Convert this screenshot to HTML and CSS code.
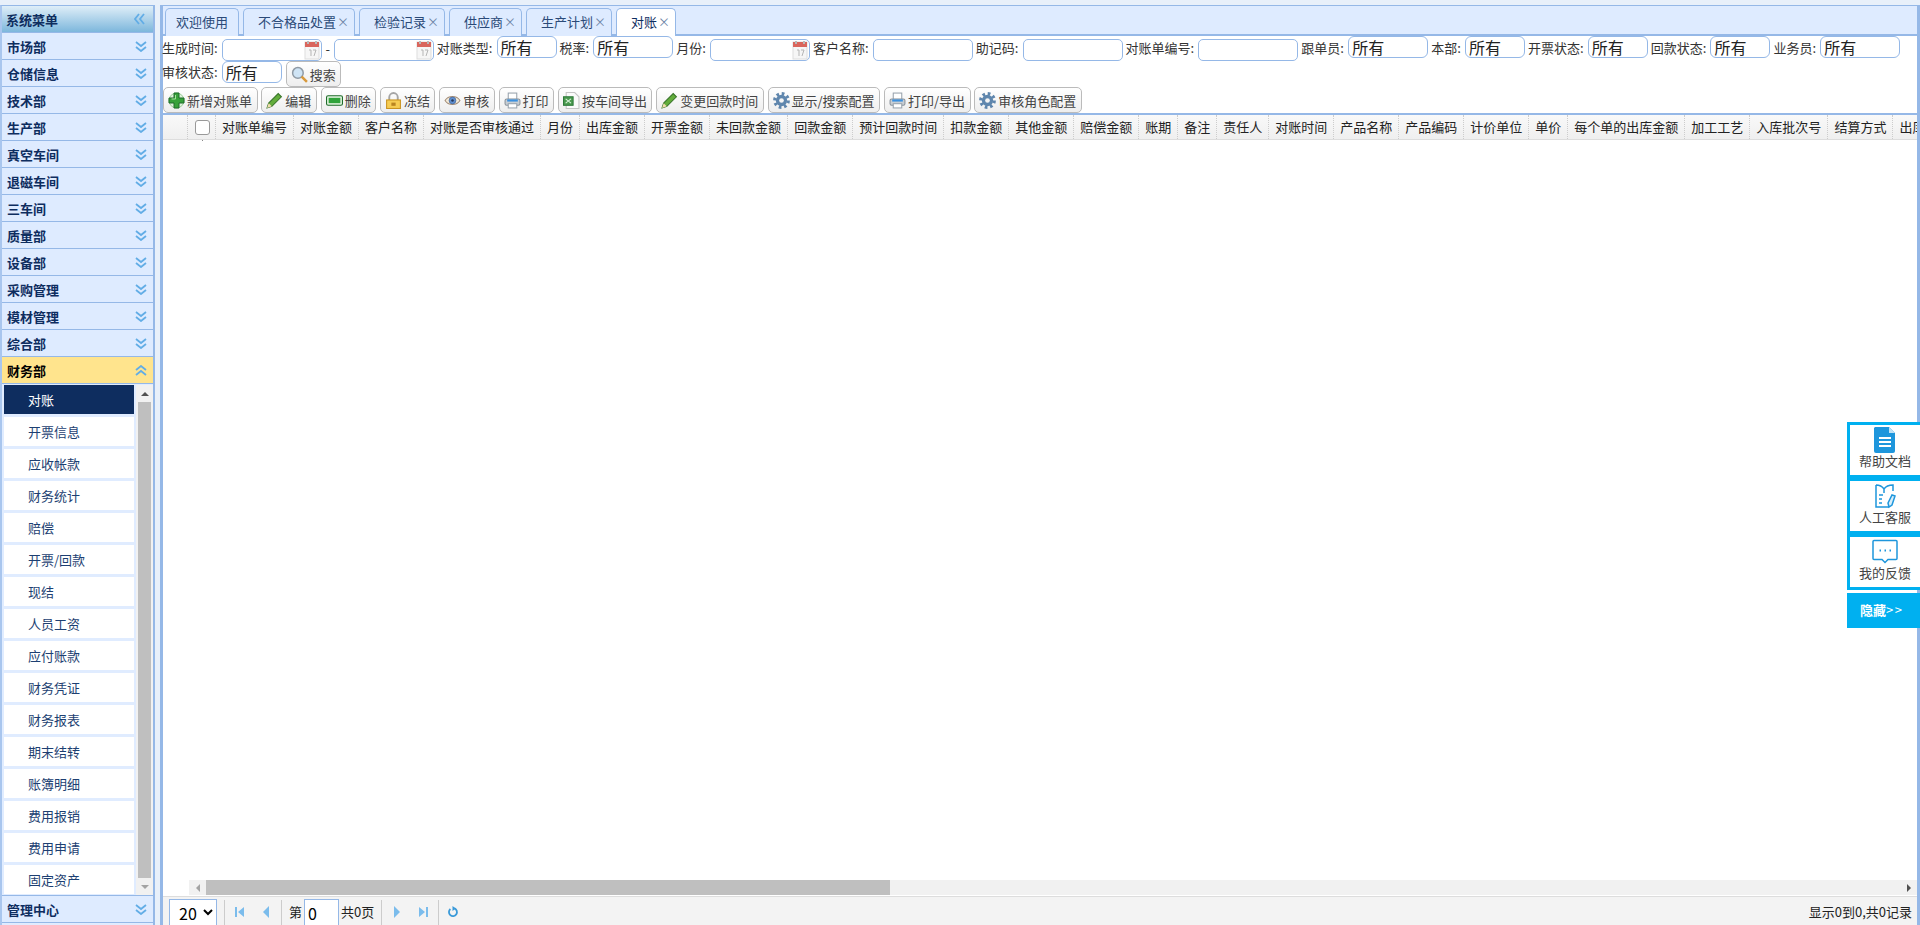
FILE: index.html
```html
<!DOCTYPE html>
<html lang="zh-CN">
<head>
<meta charset="utf-8">
<title>对账</title>
<link rel="stylesheet" href="styles.css">
</head>
<body>
<svg class="defs" width="0" height="0">
  <defs>
    <symbol id="i-down" viewBox="0 0 12 11"><path d="M1 1l5 4 5-4M1 6l5 4 5-4" fill="none" stroke="#62ade6" stroke-width="1.8"/></symbol>
    <symbol id="i-up" viewBox="0 0 12 11"><path d="M1 5l5-4 5 4M1 10l5-4 5 4" fill="none" stroke="#62ade6" stroke-width="1.8"/></symbol>
    <symbol id="i-left" viewBox="0 0 11 12"><path d="M5 1L1 6l4 5M10 1L6 6l4 5" fill="none" stroke="#62ade6" stroke-width="1.8"/></symbol>
    <symbol id="i-cal" viewBox="0 0 16 19">
      <rect x="1" y="1" width="14" height="17" fill="#f6f6f6" stroke="#ddd"/>
      <rect x="1" y="1" width="14" height="5" fill="#d9655c"/>
      <rect x="3" y="0" width="2" height="3" fill="#b9b9b9"/><rect x="11" y="0" width="2" height="3" fill="#b9b9b9"/>
      <path d="M5 9h2v6M9 9h3l-2 6" fill="none" stroke="#b5b5b5"/>
    </symbol>
    <symbol id="i-search" viewBox="0 0 16 16">
      <circle cx="6.500" cy="6.500" r="5" fill="#cfe4f5" stroke="#8f9aa5" stroke-width="1.400"/>
      <path d="M10 10l5 5" stroke="#d89a3d" stroke-width="2.400"/>
    </symbol>
    <symbol id="i-add" viewBox="0 0 17 17">
      <circle cx="8.500" cy="8.500" r="7.500" fill="#dff2dc" stroke="#9ccf98"/>
      <path d="M6 1h5v5h5v5h-5v5H6v-5H1V6h5z" fill="#37a23a" stroke="#1f6b2a"/>
      <path d="M7.500 3v4h-4" fill="none" stroke="#a5e09b"/>
    </symbol>
    <symbol id="i-pen" viewBox="0 0 16 16">
      <path d="M1 15l1.500-4.500 9-9 3 3-9 9z" fill="#63ad3c" stroke="#39752a"/>
      <path d="M1 15l1.500-4.500 3 3z" fill="#f1dcae"/>
    </symbol>
    <symbol id="i-del" viewBox="0 0 16 16">
      <rect x="0.500" y="3.500" width="15" height="9" rx="1.500" fill="#dff2dc" stroke="#1f6b2a"/>
      <rect x="2.500" y="5.500" width="11" height="5" fill="#2fa33a"/>
    </symbol>
    <symbol id="i-lock" viewBox="0 0 16 16">
      <path d="M4 8V5a4 4 0 0 1 8 0v3" fill="none" stroke="#a5a5a5" stroke-width="1.800"/>
      <rect x="1.500" y="7.500" width="13" height="8" fill="#f6cc52" stroke="#c99321"/>
      <rect x="6" y="10" width="4" height="3" fill="#b98420"/>
    </symbol>
    <symbol id="i-eye" viewBox="0 0 16 16">
      <path d="M1 8c3-5 11-5 14 0-3 5-11 5-14 0z" fill="#f2ead8" stroke="#a48d78"/>
      <circle cx="8" cy="8" r="3.200" fill="#5f8fd0" stroke="#3f5f90" stroke-width=".6"/>
      <circle cx="8" cy="8" r="1.200" fill="#26375a"/>
    </symbol>
    <symbol id="i-print" viewBox="0 0 16 16">
      <rect x="4" y="1" width="8" height="6" fill="#fff" stroke="#9aa4ae"/>
      <rect x="1" y="6.500" width="14" height="6" rx="1.500" fill="#c8ced4" stroke="#8a939c"/>
      <rect x="3" y="7" width="10" height="2" fill="#3a90e0"/>
      <rect x="4" y="11" width="8" height="4" fill="#fff" stroke="#9aa4ae"/>
    </symbol>
    <symbol id="i-xls" viewBox="0 0 16 16">
      <path d="M3 0.500h8l4 4v11H3z" fill="#fafafa" stroke="#c4c4c4"/>
      <rect x="0.500" y="4.500" width="9" height="8" fill="#4b9a4f" stroke="#2e7a3a"/>
      <path d="M2.500 6.500l5 4M7.500 6.500l-5 4" stroke="#d8f2da"/>
    </symbol>
    <symbol id="i-gear" viewBox="0 0 16 16">
      <circle cx="8" cy="8" r="6.400" fill="none" stroke="#5f86ad" stroke-width="3" stroke-dasharray="2.500 2.530"/>
      <circle cx="8" cy="8" r="5.300" fill="#5f86ad"/>
      <circle cx="8" cy="8" r="2.200" fill="#f4f4f4"/>
    </symbol>
  </defs>
</svg>

<div class="app">
  <aside class="sidebar">
    <div class="side-head"><span>系统菜单</span><svg class="chev-left"><use href="#i-left"/></svg></div>
    <div class="acc"><span>市场部</span><svg class="chev"><use href="#i-down"/></svg></div>
    <div class="acc"><span>仓储信息</span><svg class="chev"><use href="#i-down"/></svg></div>
    <div class="acc"><span>技术部</span><svg class="chev"><use href="#i-down"/></svg></div>
    <div class="acc"><span>生产部</span><svg class="chev"><use href="#i-down"/></svg></div>
    <div class="acc"><span>真空车间</span><svg class="chev"><use href="#i-down"/></svg></div>
    <div class="acc"><span>退磁车间</span><svg class="chev"><use href="#i-down"/></svg></div>
    <div class="acc"><span>三车间</span><svg class="chev"><use href="#i-down"/></svg></div>
    <div class="acc"><span>质量部</span><svg class="chev"><use href="#i-down"/></svg></div>
    <div class="acc"><span>设备部</span><svg class="chev"><use href="#i-down"/></svg></div>
    <div class="acc"><span>采购管理</span><svg class="chev"><use href="#i-down"/></svg></div>
    <div class="acc"><span>模材管理</span><svg class="chev"><use href="#i-down"/></svg></div>
    <div class="acc"><span>综合部</span><svg class="chev"><use href="#i-down"/></svg></div>
    <div class="acc acc-open"><span>财务部</span><svg class="chev"><use href="#i-up"/></svg></div>
    <div class="sub">
      <ul class="sub-list">
        <li class="sub-item is-current">对账</li>
        <li class="sub-item">开票信息</li>
        <li class="sub-item">应收帐款</li>
        <li class="sub-item">财务统计</li>
        <li class="sub-item">赔偿</li>
        <li class="sub-item">开票/回款</li>
        <li class="sub-item">现结</li>
        <li class="sub-item">人员工资</li>
        <li class="sub-item">应付账款</li>
        <li class="sub-item">财务凭证</li>
        <li class="sub-item">财务报表</li>
        <li class="sub-item">期末结转</li>
        <li class="sub-item">账簿明细</li>
        <li class="sub-item">费用报销</li>
        <li class="sub-item">费用申请</li>
        <li class="sub-item">固定资产</li>
      </ul>
      <div class="vscroll">
        <div class="arrow-box"><span class="tri-up"></span></div>
        <div class="vthumb"></div>
        <div class="arrow-box"><span class="tri-down"></span></div>
      </div>
    </div>
    <div class="acc"><span>管理中心</span><svg class="chev"><use href="#i-down"/></svg></div>
  </aside>

  <main class="main">
    <div class="tabs">
      <div class="tab tab-plain">欢迎使用</div>
      <div class="tab">不合格品处置<span class="x">×</span></div>
      <div class="tab">检验记录<span class="x">×</span></div>
      <div class="tab">供应商<span class="x">×</span></div>
      <div class="tab">生产计划<span class="x">×</span></div>
      <div class="tab tab-active">对账<span class="x">×</span></div>
    </div>

    <div class="filters">
      <div class="filter-row">
        <label class="lbl">生成时间:</label>
        <div class="date"><input class="date-input" type="text"><svg class="cal"><use href="#i-cal"/></svg></div>
        <span class="dash">-</span>
        <div class="date"><input class="date-input" type="text"><svg class="cal"><use href="#i-cal"/></svg></div>
        <label class="lbl">对账类型:</label>
        <select class="sel sel-60"><option>所有</option></select>
        <label class="lbl">税率:</label>
        <select class="sel sel-80"><option>所有</option></select>
        <label class="lbl">月份:</label>
        <div class="date"><input class="date-input" type="text"><svg class="cal"><use href="#i-cal"/></svg></div>
        <label class="lbl">客户名称:</label>
        <input class="txt" type="text">
        <label class="lbl">助记码:</label>
        <input class="txt" type="text">
        <label class="lbl">对账单编号:</label>
        <input class="txt" type="text">
        <label class="lbl">跟单员:</label>
        <select class="sel sel-80"><option>所有</option></select>
        <label class="lbl">本部:</label>
        <select class="sel sel-60"><option>所有</option></select>
        <label class="lbl">开票状态:</label>
        <select class="sel sel-60"><option>所有</option></select>
        <label class="lbl">回款状态:</label>
        <select class="sel sel-60"><option>所有</option></select>
        <label class="lbl">业务员:</label>
        <select class="sel sel-80"><option>所有</option></select>
      </div>
      <div class="filter-row">
        <label class="lbl">审核状态:</label>
        <select class="sel sel-60"><option>所有</option></select>
        <a class="btn btn-search"><svg class="ico"><use href="#i-search"/></svg>搜索</a>
      </div>
    </div>

    <div class="toolbar">
      <a class="btn"><svg class="ico"><use href="#i-add"/></svg>新增对账单</a>
      <a class="btn"><svg class="ico"><use href="#i-pen"/></svg>编辑</a>
      <a class="btn"><svg class="ico"><use href="#i-del"/></svg>删除</a>
      <a class="btn"><svg class="ico"><use href="#i-lock"/></svg>冻结</a>
      <a class="btn"><svg class="ico"><use href="#i-eye"/></svg>审核</a>
      <a class="btn"><svg class="ico"><use href="#i-print"/></svg>打印</a>
      <a class="btn"><svg class="ico"><use href="#i-xls"/></svg>按车间导出</a>
      <a class="btn"><svg class="ico"><use href="#i-pen"/></svg>变更回款时间</a>
      <a class="btn"><svg class="ico"><use href="#i-gear"/></svg>显示/搜索配置</a>
      <a class="btn"><svg class="ico"><use href="#i-print"/></svg>打印/导出</a>
      <a class="btn"><svg class="ico"><use href="#i-gear"/></svg>审核角色配置</a>
    </div>

    <div class="grid-head">
      <div class="cell cell-num"></div>
      <div class="cell cell-check"><span class="checkbox"></span></div>
      <div class="cell">对账单编号</div>
      <div class="cell">对账金额</div>
      <div class="cell">客户名称</div>
      <div class="cell">对账是否审核通过</div>
      <div class="cell">月份</div>
      <div class="cell">出库金额</div>
      <div class="cell">开票金额</div>
      <div class="cell">未回款金额</div>
      <div class="cell">回款金额</div>
      <div class="cell">预计回款时间</div>
      <div class="cell">扣款金额</div>
      <div class="cell">其他金额</div>
      <div class="cell">赔偿金额</div>
      <div class="cell">账期</div>
      <div class="cell">备注</div>
      <div class="cell">责任人</div>
      <div class="cell">对账时间</div>
      <div class="cell">产品名称</div>
      <div class="cell">产品编码</div>
      <div class="cell">计价单位</div>
      <div class="cell">单价</div>
      <div class="cell">每个单的出库金额</div>
      <div class="cell">加工工艺</div>
      <div class="cell">入库批次号</div>
      <div class="cell">结算方式</div>
      <div class="cell">出库时间</div>
    </div>

    <div class="grid-body"><span class="grid-dot"></span></div>

    <div class="hscroll">
      <div class="h-arrow"><span class="tri-left"></span></div>
      <div class="hthumb"></div>
      <div class="h-track"></div>
      <div class="h-arrow"><span class="tri-right"></span></div>
    </div>

    <div class="pager">
      <select class="page-size"><option>20</option></select>
      <span class="sep"></span>
      <div class="pg-group">
        <svg class="pg-ico" viewBox="0 0 12 12"><path d="M1 1h2v10H1zM10 1v10L4 6z"/></svg>
        <svg class="pg-ico" viewBox="0 0 12 12"><path d="M9 0v12L3 6z"/></svg>
      </div>
      <span class="sep"></span>
      <span class="pg-text">第</span>
      <input class="page-input" type="text" value="0">
      <span class="pg-text">共0页</span>
      <span class="sep"></span>
      <div class="pg-group">
        <svg class="pg-ico" viewBox="0 0 12 12"><path d="M3 0v12l6-6z"/></svg>
        <svg class="pg-ico" viewBox="0 0 12 12"><path d="M2 1v10l6-5zM9 1h2v10H9z"/></svg>
      </div>
      <span class="sep"></span>
      <svg class="pg-refresh" viewBox="0 0 12 12"><path d="M7.500 2.400A4 4 0 1 1 3.400 3" fill="none" stroke="#3a9ad9" stroke-width="1.800"/><path d="M5.500 0v5L9 2.500z" fill="#3a9ad9"/></svg>
      <span class="pg-info">显示0到0,共0记录</span>
    </div>
  </main>

  <div class="float">
    <div class="float-card">
      <svg class="float-ico" viewBox="0 0 22 26"><path d="M1 0h14l6 6v18a2 2 0 0 1-2 2H2a2 2 0 0 1-2-2V1z" fill="#1e96dc"/><path d="M15 0v6h6z" fill="#bfe2f6"/><path d="M5 11h12M5 15h12M5 19h12" stroke="#fff" stroke-width="2"/></svg>
      <span>帮助文档</span>
    </div>
    <div class="float-card">
      <svg class="float-ico" viewBox="0 0 22 26" fill="none" stroke="#1e96dc" stroke-width="1.500"><path d="M2 2c3 0 6 1 8 4 2-3 5-4 9-4v6M2 2v22h13M10 6v4"/><path d="M5 12h4M5 16h3M5 20h3"/><path d="M14 20l1 4 3-2 3-9-3-1z" fill="#d8eefa"/></svg>
      <span>人工客服</span>
    </div>
    <div class="float-card">
      <svg class="float-ico" viewBox="0 0 26 25" fill="none"><path d="M2 1h22a1 1 0 0 1 1 1v17a1 1 0 0 1-1 1h-8l-3 3-3-3H2a1 1 0 0 1-1-1V2a1 1 0 0 1 1-1z" stroke="#1e96dc" stroke-width="1.500"/><path d="M7.500 11h1.500M12.500 11h1.500M17.500 11h1.500" stroke="#1e96dc" stroke-width="2"/></svg>
      <span>我的反馈</span>
    </div>
    <div class="float-hide"><span class="hide-label">隐藏</span>&gt;&gt;</div>
  </div>
</div>
</body>
</html>
```

FILE: styles.css
```css
* { box-sizing: border-box; }

html, body {
  margin: 0;
  height: 100%;
  overflow: hidden;
}

body {
  background: #e8f0fa;
  font-family: "Noto Sans CJK SC", "Liberation Sans", sans-serif;
  font-size: 13px;
  color: #333;
}

.defs { position: absolute; }

.app {
  position: relative;
  display: flex;
  gap: 5px;
  height: 925px;
  padding-top: 5px;
}

/* sidebar */
.sidebar {
  width: 155px;
  flex: none;
  display: flex;
  flex-direction: column;
  border-top: 1px solid #95b8e7;
  border-left: 2px solid #a9c6ee;
  border-right: 2px solid #95b8e7;
  background: #e0ecff;
  color: #0e2d5f;
  font-weight: 700;
}

.side-head {
  flex: none;
  height: 27px;
  display: flex;
  align-items: center;
  justify-content: space-between;
  padding: 0 8px 0 4px;
  background: linear-gradient(to bottom, #dfeef8, #7db7dc);
  border-bottom: 1px solid #95b8e7;
}

.chev-left { width: 11px; height: 12px; }

.acc {
  flex: none;
  height: 27px;
  display: flex;
  align-items: center;
  justify-content: space-between;
  padding: 0 6px 0 5px;
  background: #deebff;
  border-bottom: 1px solid #95b8e7;
}

.acc-open {
  background: #ffe48d;
  color: #000;
}

.chev { width: 12px; height: 11px; }

.sub {
  flex: none;
  height: 512px;
  display: flex;
  padding: 1px 0 0 2px;
  background: #e0ecff;
  border-bottom: 1px solid #95b8e7;
  overflow: hidden;
}

.sub-list {
  list-style: none;
  margin: 0;
  padding: 0;
  width: 130px;
  flex: none;
  font-weight: 400;
}

.sub-item {
  height: 29px;
  margin-bottom: 3px;
  padding-left: 24px;
  line-height: 29px;
  background: #fff;
  color: #1d3f72;
}

.is-current {
  background: #0e2d5f;
  color: #fff;
}

.vscroll {
  margin-left: 2px;
  width: 17px;
  height: 510px;
  display: flex;
  flex-direction: column;
  background: #f1f1f1;
}

.arrow-box {
  height: 17px;
  flex: none;
  display: flex;
  align-items: center;
  justify-content: center;
}

.vthumb {
  flex: 1;
  margin: 0 2px;
  background: #bfbfbf;
}

.tri-up, .tri-down, .tri-left, .tri-right {
  display: block;
  width: 0;
  height: 0;
  border-style: solid;
  border-color: transparent;
}

.tri-up { border-width: 0 4px 4px; border-bottom-color: #505050; }
.tri-down { border-width: 4px 4px 0; border-top-color: #a3a3a3; }
.tri-left { border-width: 4px 4px 4px 0; border-right-color: #a3a3a3; }
.tri-right { border-width: 4px 0 4px 4px; border-left-color: #505050; }

/* main */
.main {
  flex: 1;
  min-width: 0;
  display: flex;
  flex-direction: column;
  background: #fff;
  border-top: 1px solid #95b8e7;
  border-left: 3px solid #95b8e7;
  border-right: 3px solid #95b8e7;
}

.tabs {
  flex: none;
  height: 30px;
  display: flex;
  gap: 4px;
  padding: 2px 0 0 2px;
  background: #deebff;
  border-bottom: 2px solid #95b8e7;
}

.tab {
  position: relative;
  height: 28px;
  padding: 0 18px 0 14px;
  line-height: 26px;
  color: #2b4a78;
  background: #deebff;
  border: 1px solid #95b8e7;
  border-bottom: 0;
  border-radius: 5px 5px 0 0;
  white-space: nowrap;
}

.tab-plain { padding: 0 10px; }

.tab-active {
  background: #fff;
  color: #0e2d5f;
  z-index: 1;
}

.x {
  position: absolute;
  right: 5px;
  top: 0;
  color: #6d83a6;
  font-size: 12px;
}

.filters {
  flex: none;
  height: 51px;
  margin-left: -1px;
}

.filter-row {
  display: flex;
  gap: 3px;
  height: 25px;
  align-items: flex-start;
  white-space: nowrap;
}

.filter-row + .filter-row { height: 26px; }

.lbl {
  line-height: 22px;
  margin-top: 1px;
  margin-right: 1.15px;
  color: #333;
}

.filter-row + .filter-row .lbl { margin-top: 0; }

.dash {
  width: 6px;
  text-align: center;
  line-height: 22px;
  margin-top: 2px;
}

.date {
  width: 100px;
  height: 22px;
  margin-top: 3px;
  display: flex;
  align-items: center;
  border: 1px solid #95b8e7;
  border-radius: 5px;
  background: #fff;
}

.date-input {
  flex: 1;
  min-width: 0;
  border: 0;
  padding: 0;
  outline: 0;
  background: none;
}

.cal { width: 16px; height: 19px; margin-right: 1px; flex: none; }

.txt {
  width: 100px;
  height: 22px;
  margin-top: 3px;
  padding: 0 4px;
  border: 1px solid #95b8e7;
  border-radius: 5px;
  outline: 0;
}

.sel {
  appearance: none;
  height: 22px;
  padding: 0 3px;
  border: 1px solid #95b8e7;
  border-radius: 6px;
  background: #fff;
  font-family: inherit;
  font-size: 16px;
  line-height: 20px;
  color: #222;
}

.sel-60 { width: 60px; }
.sel-80 { width: 80px; }

.toolbar {
  flex: none;
  height: 26px;
  display: flex;
  gap: 3.8px;
  white-space: nowrap;
}

.btn {
  height: 26px;
  display: inline-flex;
  align-items: center;
  gap: 2px;
  padding: 0 4.5px 0 4px;
  border: 1px solid #bbb;
  border-radius: 5px;
  background: linear-gradient(to bottom, #fff, #eee);
  color: #444;
}

.btn-search { margin-left: 1px; }

.ico { width: 17px; height: 17px; flex: none; }

.grid-head {
  flex: none;
  height: 27px;
  display: flex;
  overflow: hidden;
  border-top: 2px solid #95b8e7;
  border-bottom: 1px solid #ddd;
  background: linear-gradient(to bottom, #f9f9f9, #efefef);
  color: #222;
}

.cell {
  flex: none;
  padding: 0 6px;
  line-height: 24px;
  border-right: 1px dotted #ccc;
  white-space: nowrap;
}

.cell-num { width: 25px; padding: 0; }

.cell-check {
  width: 28px;
  padding: 0 0 0 2px;
  display: flex;
  align-items: center;
  justify-content: center;
}

.checkbox {
  width: 15px;
  height: 15px;
  background: #fff;
  border: 1px solid #999;
  border-radius: 3px;
}

.grid-body { flex: 1; min-height: 0; }

.grid-dot {
  display: block;
  width: 1px;
  height: 1px;
  margin-left: 39px;
  background: #888;
}

.hscroll {
  flex: none;
  height: 15px;
  margin-left: 26px;
  display: flex;
  background: #f1f1f1;
}

.h-arrow {
  flex: none;
  width: 17px;
  display: flex;
  align-items: center;
  justify-content: center;
}

.hthumb {
  flex: none;
  width: 684px;
  background: #bfbfbf;
}

.h-track { flex: 1; }

.pager {
  flex: none;
  height: 29px;
  margin-top: 1px;
  display: flex;
  align-items: flex-start;
  padding: 2px 0 0 6px;
  background: #f3f3f3;
  border-top: 1px solid #ddd;
  color: #222;
}

.page-size {
  width: 48px;
  height: 27px;
  flex: none;
  padding: 0 0 0 5px;
  border: 1px solid #95b8e7;
  border-radius: 0;
  background: #fff;
  font-family: inherit;
  font-size: 16px;
  color: #000;
}

.sep {
  flex: none;
  width: 1px;
  height: 25px;
  margin: 1px 7px 0;
  background: #ccc;
}

.pg-group {
  flex: none;
  display: flex;
  gap: 14px;
  padding: 0 2px;
}

.pg-ico {
  flex: none;
  width: 12px;
  height: 12px;
  margin-top: 7px;
  fill: #7bbcec;
}

.pg-text { line-height: 26px; }

.page-input {
  width: 35px;
  height: 27px;
  margin: 0 2px;
  padding: 0 3px;
  border: 1px solid #95b8e7;
  font-family: inherit;
  font-size: 16px;
  outline: 0;
}

.pg-refresh {
  flex: none;
  width: 12px;
  height: 12px;
  margin: 7px 0 0 1px;
}

.pg-info {
  margin-left: auto;
  margin-right: 5px;
  line-height: 26px;
}

/* floating help */
.float {
  position: absolute;
  right: 0;
  top: 422px;
  width: 73px;
}

.float-card {
  height: 56px;
  display: flex;
  flex-direction: column;
  align-items: center;
  background: #fff;
  border: 3px solid #00b0f0;
  border-right: 0;
  color: #444;
  line-height: 16px;
}

.float-ico {
  width: 26px;
  height: 26px;
  margin-top: 2px;
  flex: none;
}

.float-hide {
  height: 35px;
  margin-top: 3px;
  padding-left: 13px;
  line-height: 33px;
  background: #00b0f0;
  color: #fff;
  letter-spacing: 1.5px;
}

.hide-label { font-weight: 700; letter-spacing: 0; }
```
